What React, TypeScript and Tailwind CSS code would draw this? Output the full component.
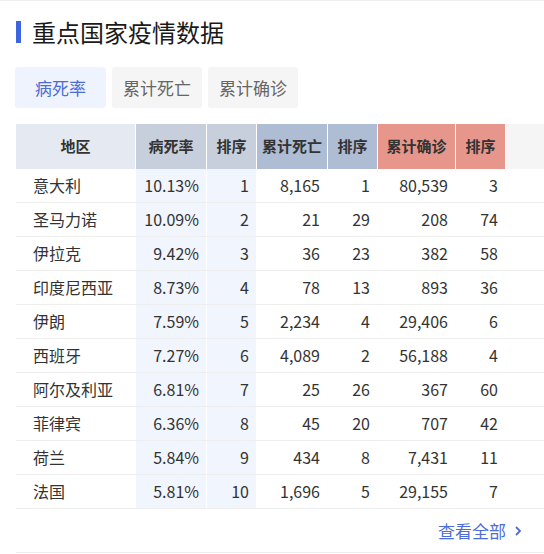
import React from "react";

const rows = [
  ["意大利", "10.13%", "1", "8,165", "1", "80,539", "3"],
  ["圣马力诺", "10.09%", "2", "21", "29", "208", "74"],
  ["伊拉克", "9.42%", "3", "36", "23", "382", "58"],
  ["印度尼西亚", "8.73%", "4", "78", "13", "893", "36"],
  ["伊朗", "7.59%", "5", "2,234", "4", "29,406", "6"],
  ["西班牙", "7.27%", "6", "4,089", "2", "56,188", "4"],
  ["阿尔及利亚", "6.81%", "7", "25", "26", "367", "60"],
  ["菲律宾", "6.36%", "8", "45", "20", "707", "42"],
  ["荷兰", "5.84%", "9", "434", "8", "7,431", "11"],
  ["法国", "5.81%", "10", "1,696", "5", "29,155", "7"],
];

const gridCols = "grid grid-cols-[120px_71px_50px_71px_50px_78px_50px_1fr]";

export default function App() {
  return (
    <div
      className="w-[544px] h-[554px] bg-white overflow-hidden border-t border-[#f0f0f0]"
      style={{ fontFamily: '"Noto Sans CJK SC", "Noto Sans", sans-serif' }}
    >
      <div className="flex items-center pl-4 mt-[19px] h-[24px]">
        <div className="w-[5px] h-[22px] bg-[#3d65e0]"></div>
        <div className="ml-[11px] text-[24px] leading-[24px] text-[#1a1a1a]">重点国家疫情数据</div>
      </div>

      <div className="flex pl-[15px] mt-[23px] gap-[6px]">
        <div className="w-[91px] h-[41px] rounded-[3px] bg-[#eef3fe] text-[#4d6cd6] text-[17px] flex items-center justify-center">病死率</div>
        <div className="w-[90px] h-[41px] rounded-[3px] bg-[#f5f5f5] text-[#666666] text-[17px] flex items-center justify-center">累计死亡</div>
        <div className="w-[90px] h-[41px] rounded-[3px] bg-[#f5f5f5] text-[#666666] text-[17px] flex items-center justify-center">累计确诊</div>
      </div>

      <div className="ml-4 mt-[16px]">
        <div className={`${gridCols} h-[45px] text-[15px] font-bold text-[#333333]`}>
          <div className="bg-[#e4e9f2] border-r border-white flex items-center justify-center">地区</div>
          <div className="bg-[#c8cfdc] border-r border-white flex items-center justify-center">病死率</div>
          <div className="bg-[#c8cfdc] border-r border-white flex items-center justify-center">排序</div>
          <div className="bg-[#aebcd4] border-r border-white flex items-center justify-center">累计死亡</div>
          <div className="bg-[#aebcd4] border-r border-white flex items-center justify-center">排序</div>
          <div className="bg-[#e7968b] border-r border-white flex items-center justify-center">累计确诊</div>
          <div className="bg-[#e7968b] border-r border-white flex items-center justify-center">排序</div>
          <div className="bg-[#f5f5f5]"></div>
        </div>
        {rows.map((r, i) => (
          <div key={i} className={`${gridCols} h-[34px] text-[16px] leading-[20px] text-[#333333] border-b border-[#eeeeee]`}>
            <div className="pl-[17px] flex items-center pb-[2px]">{r[0]}</div>
            <div className="bg-[#f0f5fe] border-r border-white flex items-center justify-end pr-[7px] pb-[2px]">{r[1]}</div>
            <div className="bg-[#f0f5fe] border-r border-white flex items-center justify-end pr-[7px] pb-[2px]">{r[2]}</div>
            <div className="border-r border-white flex items-center justify-end pr-[7px] pb-[2px]">{r[3]}</div>
            <div className="border-r border-white flex items-center justify-end pr-[7px] pb-[2px]">{r[4]}</div>
            <div className="border-r border-white flex items-center justify-end pr-[7px] pb-[2px]">{r[5]}</div>
            <div className="border-r border-white flex items-center justify-end pr-[7px] pb-[2px]">{r[6]}</div>
            <div></div>
          </div>
        ))}
        <div className="h-[44px] border-b border-[#eeeeee] flex items-center justify-end pr-[22px] text-[17px] text-[#4d6cd6]">
          <span>查看全部</span>
          <svg width="8" height="12" viewBox="0 0 8 12" className="ml-[8px]">
            <path d="M2 2 L6 6 L2 10" fill="none" stroke="#4d6cd6" strokeWidth="1.8" />
          </svg>
        </div>
      </div>
    </div>
  );
}
